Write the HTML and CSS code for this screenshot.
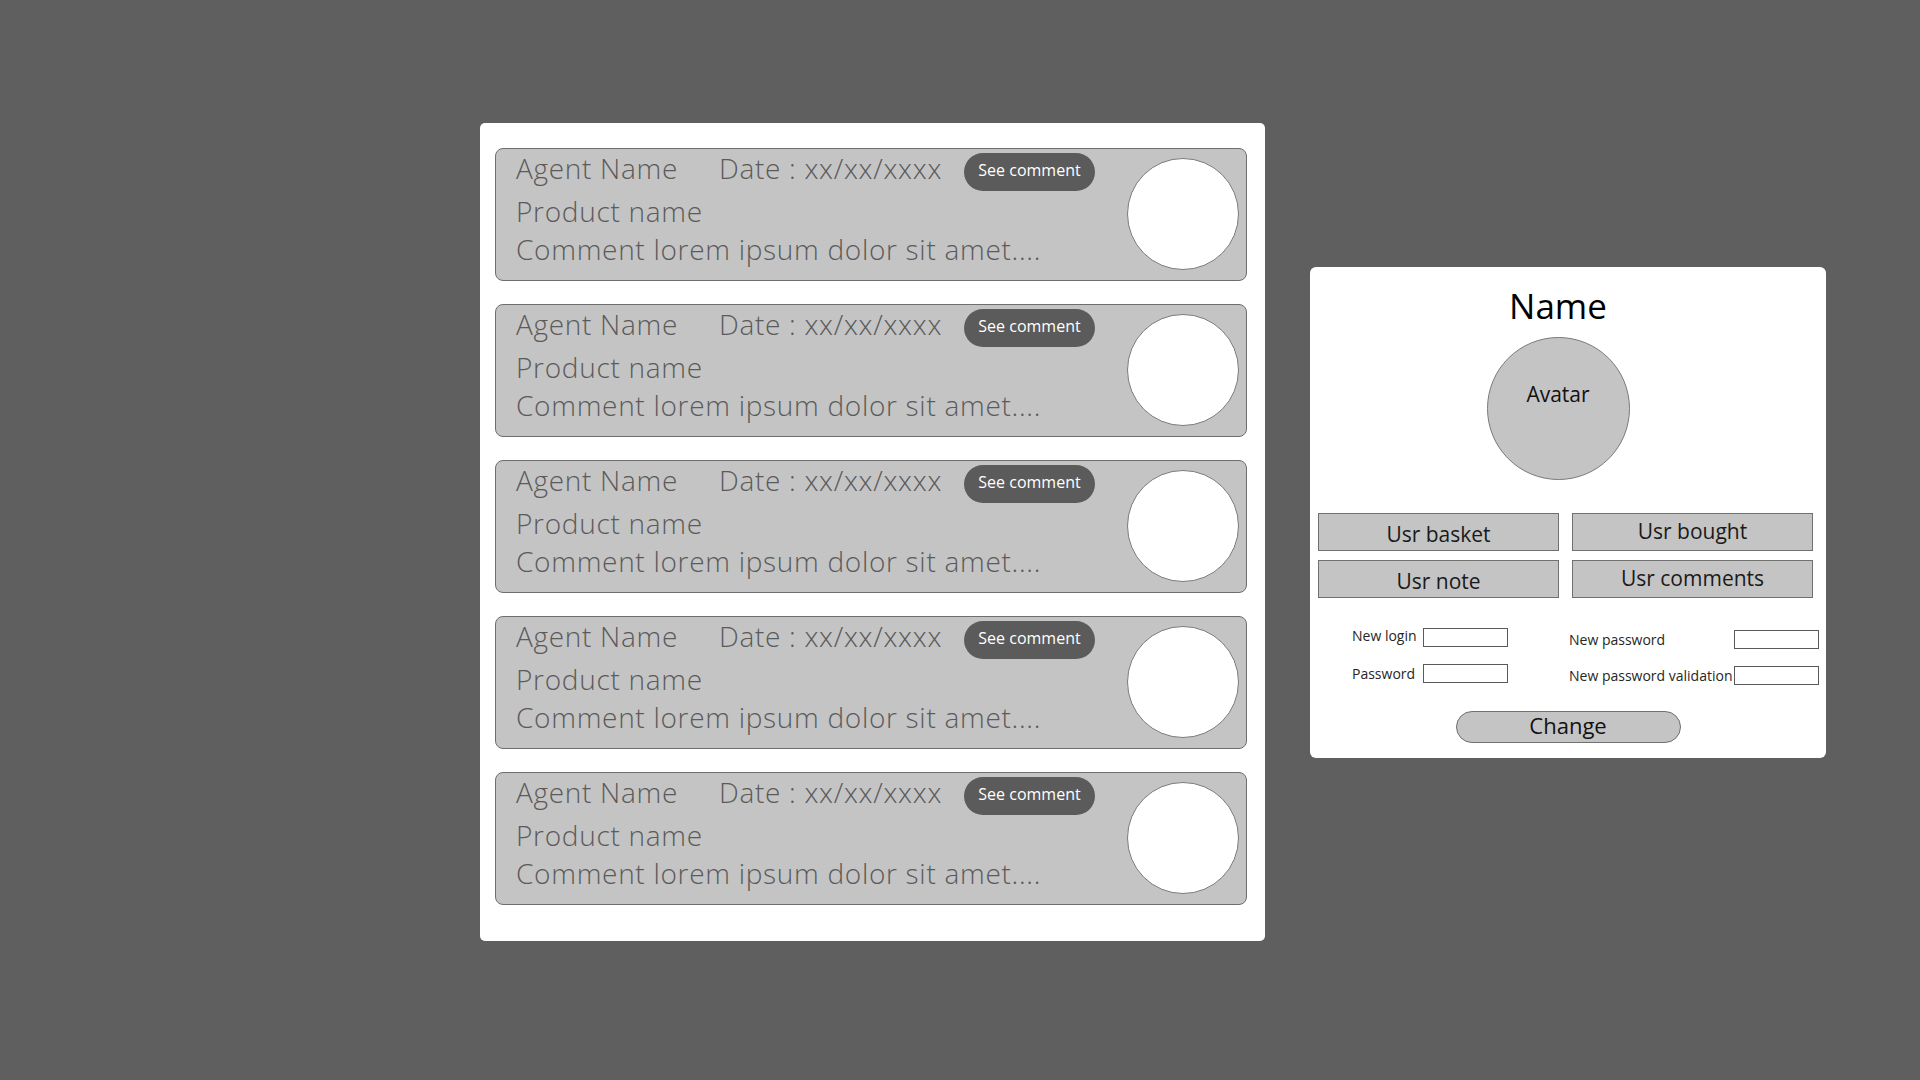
FILE: index.html
```html
<!DOCTYPE html>
<html lang="en">
<head>
<meta charset="utf-8">
<title>Comments</title>
<link rel="stylesheet" href="styles.css">
</head>
<body>
<div class="page">
  <section class="comments-panel">
    <div class="card">
      <div class="card-text">
        <div class="card-head">
          <span class="agent">Agent Name</span>
          <span class="date">Date : xx/xx/xxxx</span>
          <button class="see-btn">See comment</button>
        </div>
        <div class="line">Product name</div>
        <div class="line">Comment lorem ipsum dolor sit amet....</div>
      </div>
      <div class="card-avatar"></div>
    </div>
    <div class="card">
      <div class="card-text">
        <div class="card-head">
          <span class="agent">Agent Name</span>
          <span class="date">Date : xx/xx/xxxx</span>
          <button class="see-btn">See comment</button>
        </div>
        <div class="line">Product name</div>
        <div class="line">Comment lorem ipsum dolor sit amet....</div>
      </div>
      <div class="card-avatar"></div>
    </div>
    <div class="card">
      <div class="card-text">
        <div class="card-head">
          <span class="agent">Agent Name</span>
          <span class="date">Date : xx/xx/xxxx</span>
          <button class="see-btn">See comment</button>
        </div>
        <div class="line">Product name</div>
        <div class="line">Comment lorem ipsum dolor sit amet....</div>
      </div>
      <div class="card-avatar"></div>
    </div>
    <div class="card">
      <div class="card-text">
        <div class="card-head">
          <span class="agent">Agent Name</span>
          <span class="date">Date : xx/xx/xxxx</span>
          <button class="see-btn">See comment</button>
        </div>
        <div class="line">Product name</div>
        <div class="line">Comment lorem ipsum dolor sit amet....</div>
      </div>
      <div class="card-avatar"></div>
    </div>
    <div class="card">
      <div class="card-text">
        <div class="card-head">
          <span class="agent">Agent Name</span>
          <span class="date">Date : xx/xx/xxxx</span>
          <button class="see-btn">See comment</button>
        </div>
        <div class="line">Product name</div>
        <div class="line">Comment lorem ipsum dolor sit amet....</div>
      </div>
      <div class="card-avatar"></div>
    </div>
  </section>

  <section class="user-panel">
    <div class="user-top">
      <h1 class="user-name">Name</h1>
      <div class="user-avatar">Avatar</div>
    </div>
    <div class="user-buttons">
      <button class="usr-btn usr-btn-low">Usr basket</button>
      <button class="usr-btn usr-btn-high">Usr bought</button>
      <button class="usr-btn usr-btn-low">Usr note</button>
      <button class="usr-btn usr-btn-high">Usr comments</button>
    </div>
    <div class="user-form">
      <div class="form-group form-left">
        <label class="form-label">New login</label>
        <input class="form-input" type="text">
        <label class="form-label">Password</label>
        <input class="form-input" type="password">
      </div>
      <div class="form-group form-right">
        <label class="form-label">New password</label>
        <input class="form-input" type="password">
        <label class="form-label">New password validation</label>
        <input class="form-input" type="password">
      </div>
    </div>
    <div class="change-row">
      <button class="change-btn">Change</button>
    </div>
  </section>
</div>
</body>
</html>
```

FILE: styles.css
```css
* { box-sizing: border-box; }

html, body {
  margin: 0;
  padding: 0;
  background: #5f5f5f;
  font-family: "Open Sans", "Noto Sans", sans-serif;
}

.page {
  display: flex;
  align-items: flex-start;
  gap: 45px;
  padding: 123px 0 0 480px;
  width: 1920px;
  height: 1080px;
}

/* Left panel */
.comments-panel {
  width: 785px;
  background: #ffffff;
  border-radius: 5px;
  padding: 25px 18px 36px 15px;
  display: flex;
  flex-direction: column;
  gap: 23px;
}

.card {
  display: flex;
  justify-content: space-between;
  align-items: flex-start;
  width: 752px;
  height: 133px;
  background: #c4c4c4;
  border: 1px solid #6e6e6e;
  border-radius: 8px;
  padding: 0 7px 0 20px;
}

.card-text {
  color: #5b5b5b;
  font-size: 28px;
  font-weight: 300;
  letter-spacing: 0.7px;
  white-space: nowrap;
}

.card-head {
  display: flex;
  align-items: flex-start;
  height: 43px;
  line-height: 39px;
}

.agent {
  display: block;
  width: 203px;
}

.date {
  display: block;
  width: 245px;
}

.see-btn {
  margin-top: 4px;
  height: 38px;
  width: 131px;
  border: none;
  border-radius: 19px;
  background: #5b5b5b;
  color: #ffffff;
  font-family: "Open Sans", "Noto Sans", sans-serif;
  font-size: 16px;
  letter-spacing: 0;
  line-height: 34px;
  padding: 0 0 4px 0;
}

.line {
  height: 38px;
  line-height: 38px;
}

.card-avatar {
  width: 112px;
  height: 112px;
  margin-top: 9px;
  border-radius: 50%;
  background: #ffffff;
  border: 1px solid #7a7a7a;
}

/* Right panel */
.user-panel {
  margin-top: 144px;
  width: 516px;
  height: 491px;
  background: #ffffff;
  border-radius: 6px;
  padding: 16px 13px 15px 8px;
  display: flex;
  flex-direction: column;
}

.user-top {
  display: flex;
  flex-direction: column;
  align-items: center;
  padding-right: 15px;
}

.user-name {
  margin: 0;
  font-size: 35px;
  font-weight: 400;
  line-height: 46px;
  color: #000000;
}

.user-avatar {
  margin-top: 8px;
  width: 143px;
  height: 143px;
  border-radius: 50%;
  background: #c4c4c4;
  border: 1px solid #7a7a7a;
  text-align: center;
  padding-top: 42px;
  font-size: 21px;
  line-height: 29px;
  color: #111111;
}

.user-buttons {
  margin-top: 33px;
  display: grid;
  grid-template-columns: 241px 241px;
  grid-auto-rows: 38px;
  column-gap: 13px;
  row-gap: 9px;
}

.usr-btn {
  background: #c4c4c4;
  border: 1px solid #707070;
  border-radius: 0;
  padding: 0;
  font-family: "Open Sans", "Noto Sans", sans-serif;
  font-size: 21px;
  line-height: 30px;
  color: #1a1a1a;
}

.usr-btn-low {
  padding-top: 4px;
}

.usr-btn-high {
  padding-bottom: 3px;
}

.user-form {
  margin-top: 30px;
  display: flex;
  padding-left: 34px;
  gap: 61px;
  font-size: 14px;
  color: #262626;
}

.form-group {
  display: grid;
  row-gap: 17px;
  grid-auto-rows: 19px;
  align-items: center;
}

.form-left {
  grid-template-columns: 71px 85px;
}

.form-left .form-label:first-child {
  position: relative;
  top: -2px;
}

.form-right {
  margin-top: 2px;
  grid-template-columns: 165px 85px;
}

.form-label {
  line-height: 19px;
  white-space: nowrap;
}

.form-input {
  width: 85px;
  height: 19px;
  border: 1px solid #5a5a5a;
  background: #ffffff;
  padding: 0;
  margin: 0;
}

.change-row {
  margin-top: 26px;
  display: flex;
  justify-content: center;
  padding-left: 5px;
}

.change-btn {
  width: 225px;
  height: 32px;
  background: #c4c4c4;
  border: 1px solid #707070;
  border-radius: 16px;
  padding: 0 0 3px 0;
  font-family: "Open Sans", "Noto Sans", sans-serif;
  font-size: 22px;
  line-height: 27px;
  color: #111111;
}
```
